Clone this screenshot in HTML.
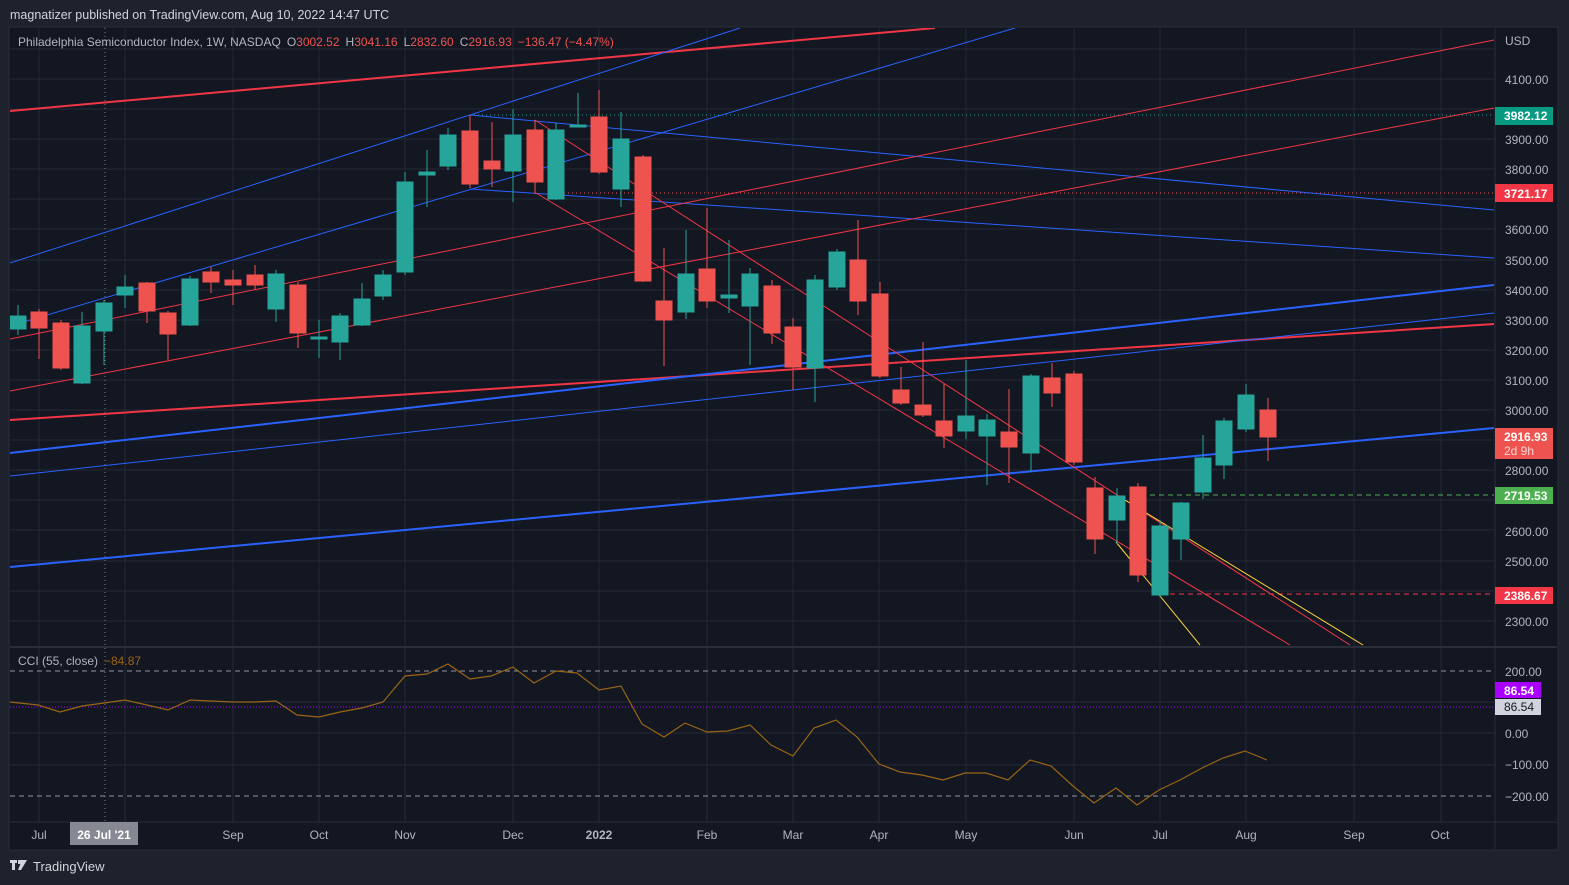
<!DOCTYPE html>
<html><head><meta charset="utf-8"><style>
html,body{margin:0;padding:0;background:#1e222d;width:1569px;height:885px;overflow:hidden;font-family:"Liberation Sans",sans-serif}
svg{display:block}
</style></head><body>
<svg width="1569" height="885" xmlns="http://www.w3.org/2000/svg" font-family="Liberation Sans, sans-serif">
<rect width="1569" height="885" fill="#1e222d"/>
<text x="10" y="19" fill="#d1d4dc" font-size="12.5">magnatizer published on TradingView.com, Aug 10, 2022 14:47 UTC</text>
<rect x="9" y="27" width="1549" height="823" fill="#131722" stroke="#2a2e39"/>
<g stroke="#262a35" stroke-width="1">
<line x1="10" y1="49" x2="1494" y2="49"/><line x1="10" y1="79" x2="1494" y2="79"/><line x1="10" y1="109" x2="1494" y2="109"/><line x1="10" y1="139" x2="1494" y2="139"/><line x1="10" y1="169" x2="1494" y2="169"/><line x1="10" y1="199" x2="1494" y2="199"/><line x1="10" y1="229" x2="1494" y2="229"/><line x1="10" y1="260" x2="1494" y2="260"/><line x1="10" y1="290" x2="1494" y2="290"/><line x1="10" y1="320" x2="1494" y2="320"/><line x1="10" y1="350" x2="1494" y2="350"/><line x1="10" y1="380" x2="1494" y2="380"/><line x1="10" y1="410" x2="1494" y2="410"/><line x1="10" y1="440" x2="1494" y2="440"/><line x1="10" y1="470" x2="1494" y2="470"/><line x1="10" y1="500" x2="1494" y2="500"/><line x1="10" y1="530" x2="1494" y2="530"/><line x1="10" y1="561" x2="1494" y2="561"/><line x1="10" y1="591" x2="1494" y2="591"/><line x1="10" y1="621" x2="1494" y2="621"/>
<line x1="10" y1="702" x2="1494" y2="702"/><line x1="10" y1="733" x2="1494" y2="733"/><line x1="10" y1="765" x2="1494" y2="765"/>
<line x1="39" y1="28" x2="39" y2="822"/><line x1="125" y1="28" x2="125" y2="822"/><line x1="233" y1="28" x2="233" y2="822"/><line x1="319" y1="28" x2="319" y2="822"/><line x1="405" y1="28" x2="405" y2="822"/><line x1="513" y1="28" x2="513" y2="822"/><line x1="599" y1="28" x2="599" y2="822"/><line x1="707" y1="28" x2="707" y2="822"/><line x1="793" y1="28" x2="793" y2="822"/><line x1="879" y1="28" x2="879" y2="822"/><line x1="966" y1="28" x2="966" y2="822"/><line x1="1074" y1="28" x2="1074" y2="822"/><line x1="1160" y1="28" x2="1160" y2="822"/><line x1="1246" y1="28" x2="1246" y2="822"/><line x1="1354" y1="28" x2="1354" y2="822"/><line x1="1441" y1="28" x2="1441" y2="822"/>
</g>
<line x1="10" y1="647" x2="1557" y2="647" stroke="#2a2e39" stroke-width="2"/>
<line x1="10" y1="822" x2="1557" y2="822" stroke="#2a2e39"/>
<line x1="1495" y1="28" x2="1495" y2="849" stroke="#2a2e39"/>
<line x1="105" y1="28" x2="105" y2="822" stroke="#787b86" stroke-dasharray="1,3"/>
<line x1="470" y1="115" x2="1494" y2="115" stroke="#26a69a" stroke-dasharray="1,3"/>
<line x1="560" y1="193" x2="1494" y2="193" stroke="#ef5350" stroke-dasharray="1,3"/>
<line x1="1150" y1="495" x2="1494" y2="495" stroke="#4caf50" stroke-dasharray="5,4"/>
<line x1="1170" y1="594" x2="1494" y2="594" stroke="#f23645" stroke-dasharray="5,4"/>
<svg x="10" y="28" width="1485" height="619" viewBox="10 28 1485 619" overflow="hidden">
<g fill="none">
<line x1="10" y1="111" x2="935" y2="28" stroke="#f23645" stroke-width="2"/>
<line x1="10" y1="263" x2="740" y2="28" stroke="#2962ff" stroke-width="1"/>
<line x1="10" y1="326" x2="1015" y2="28" stroke="#2962ff" stroke-width="1"/>
<line x1="470" y1="115" x2="1494" y2="210" stroke="#2962ff" stroke-width="1"/>
<line x1="470" y1="189" x2="1494" y2="258" stroke="#2962ff" stroke-width="1"/>
<line x1="10" y1="339" x2="1494" y2="40" stroke="#f23645" stroke-width="1"/>
<line x1="10" y1="391" x2="1494" y2="108" stroke="#f23645" stroke-width="1"/>
<line x1="10" y1="420" x2="1494" y2="324" stroke="#f23645" stroke-width="2"/>
<line x1="10" y1="453" x2="1494" y2="285" stroke="#2962ff" stroke-width="2"/>
<line x1="10" y1="476" x2="1494" y2="313" stroke="#2962ff" stroke-width="1"/>
<line x1="10" y1="567" x2="1494" y2="428" stroke="#2962ff" stroke-width="2"/>
<line x1="535" y1="120" x2="1350" y2="645" stroke="#f23645" stroke-width="1"/>
<line x1="536" y1="193" x2="1290" y2="645" stroke="#f23645" stroke-width="1"/>
<line x1="1116" y1="542" x2="1200" y2="645" stroke="#fdd835" stroke-width="1"/>
<line x1="1125" y1="500" x2="1363" y2="645" stroke="#fdd835" stroke-width="1"/>
</g>
<g stroke-width="1">
<g fill="#26a69a" stroke="#26a69a">
<line x1="18" y1="305" x2="18" y2="335"/><rect x="10" y="316" width="16" height="13"/>
<line x1="82" y1="312" x2="82" y2="384"/><rect x="74" y="326" width="16" height="57"/>
<line x1="104" y1="300" x2="104" y2="365"/><rect x="96" y="303" width="16" height="28"/>
<line x1="125" y1="275" x2="125" y2="308"/><rect x="117" y="287" width="16" height="8"/>
<line x1="190" y1="276" x2="190" y2="326"/><rect x="182" y="279" width="16" height="46"/>
<line x1="276" y1="270" x2="276" y2="322"/><rect x="268" y="274" width="16" height="35"/>
<line x1="319" y1="320" x2="319" y2="358"/><rect x="311" y="337" width="16" height="2"/>
<line x1="340" y1="313" x2="340" y2="360"/><rect x="332" y="316" width="16" height="26"/>
<line x1="362" y1="283" x2="362" y2="326"/><rect x="354" y="299" width="16" height="26"/>
<line x1="383" y1="270" x2="383" y2="300"/><rect x="375" y="275" width="16" height="21"/>
<line x1="405" y1="172" x2="405" y2="275"/><rect x="397" y="182" width="16" height="90"/>
<line x1="427" y1="150" x2="427" y2="207"/><rect x="419" y="172" width="16" height="3"/>
<line x1="448" y1="128" x2="448" y2="170"/><rect x="440" y="135" width="16" height="31"/>
<line x1="513" y1="109" x2="513" y2="202"/><rect x="505" y="135" width="16" height="36"/>
<line x1="556" y1="123" x2="556" y2="200"/><rect x="548" y="130" width="16" height="69"/>
<line x1="578" y1="93" x2="578" y2="126"/><rect x="570" y="125" width="16" height="2"/>
<line x1="621" y1="112" x2="621" y2="207"/><rect x="613" y="139" width="16" height="50"/>
<line x1="686" y1="230" x2="686" y2="319"/><rect x="678" y="274" width="16" height="38"/>
<line x1="729" y1="240" x2="729" y2="313"/><rect x="721" y="295" width="16" height="3"/>
<line x1="750" y1="268" x2="750" y2="365"/><rect x="742" y="274" width="16" height="32"/>
<line x1="815" y1="275" x2="815" y2="402"/><rect x="807" y="280" width="16" height="88"/>
<line x1="837" y1="249" x2="837" y2="290"/><rect x="829" y="252" width="16" height="35"/>
<line x1="966" y1="360" x2="966" y2="439"/><rect x="958" y="416" width="16" height="15"/>
<line x1="987" y1="414" x2="987" y2="485"/><rect x="979" y="420" width="16" height="16"/>
<line x1="1031" y1="374" x2="1031" y2="472"/><rect x="1023" y="376" width="16" height="77"/>
<line x1="1117" y1="488" x2="1117" y2="544"/><rect x="1109" y="496" width="16" height="24"/>
<line x1="1160" y1="520" x2="1160" y2="597"/><rect x="1152" y="526" width="16" height="69"/>
<line x1="1181" y1="502" x2="1181" y2="560"/><rect x="1173" y="503" width="16" height="36"/>
<line x1="1203" y1="435" x2="1203" y2="499"/><rect x="1195" y="458" width="16" height="34"/>
<line x1="1224" y1="418" x2="1224" y2="479"/><rect x="1216" y="421" width="16" height="44"/>
<line x1="1246" y1="384" x2="1246" y2="432"/><rect x="1238" y="395" width="16" height="34"/>
</g>
<g fill="#ef5350" stroke="#ef5350">
<line x1="39" y1="309" x2="39" y2="359"/><rect x="31" y="312" width="16" height="16"/>
<line x1="61" y1="320" x2="61" y2="370"/><rect x="53" y="323" width="16" height="45"/>
<line x1="147" y1="282" x2="147" y2="323"/><rect x="139" y="283" width="16" height="28"/>
<line x1="168" y1="311" x2="168" y2="360"/><rect x="160" y="313" width="16" height="21"/>
<line x1="211" y1="267" x2="211" y2="293"/><rect x="203" y="272" width="16" height="10"/>
<line x1="233" y1="270" x2="233" y2="305"/><rect x="225" y="280" width="16" height="5"/>
<line x1="255" y1="265" x2="255" y2="290"/><rect x="247" y="275" width="16" height="10"/>
<line x1="298" y1="282" x2="298" y2="348"/><rect x="290" y="285" width="16" height="48"/>
<line x1="470" y1="115" x2="470" y2="188"/><rect x="462" y="131" width="16" height="53"/>
<line x1="492" y1="122" x2="492" y2="187"/><rect x="484" y="161" width="16" height="8"/>
<line x1="535" y1="120" x2="535" y2="194"/><rect x="527" y="130" width="16" height="52"/>
<line x1="599" y1="90" x2="599" y2="174"/><rect x="591" y="117" width="16" height="55"/>
<line x1="643" y1="155" x2="643" y2="282"/><rect x="635" y="157" width="16" height="124"/>
<line x1="664" y1="248" x2="664" y2="366"/><rect x="656" y="301" width="16" height="19"/>
<line x1="707" y1="208" x2="707" y2="308"/><rect x="699" y="269" width="16" height="32"/>
<line x1="772" y1="280" x2="772" y2="344"/><rect x="764" y="286" width="16" height="47"/>
<line x1="793" y1="318" x2="793" y2="390"/><rect x="785" y="327" width="16" height="40"/>
<line x1="858" y1="220" x2="858" y2="315"/><rect x="850" y="260" width="16" height="41"/>
<line x1="880" y1="282" x2="880" y2="378"/><rect x="872" y="294" width="16" height="82"/>
<line x1="901" y1="367" x2="901" y2="405"/><rect x="893" y="390" width="16" height="13"/>
<line x1="923" y1="342" x2="923" y2="417"/><rect x="915" y="405" width="16" height="10"/>
<line x1="944" y1="384" x2="944" y2="448"/><rect x="936" y="421" width="16" height="15"/>
<line x1="1009" y1="389" x2="1009" y2="483"/><rect x="1001" y="432" width="16" height="15"/>
<line x1="1052" y1="363" x2="1052" y2="407"/><rect x="1044" y="378" width="16" height="15"/>
<line x1="1074" y1="371" x2="1074" y2="465"/><rect x="1066" y="374" width="16" height="88"/>
<line x1="1095" y1="477" x2="1095" y2="554"/><rect x="1087" y="488" width="16" height="51"/>
<line x1="1138" y1="483" x2="1138" y2="582"/><rect x="1130" y="487" width="16" height="88"/>
<line x1="1268" y1="398" x2="1268" y2="461"/><rect x="1260" y="410" width="16" height="27"/>
</g>
</g>
</svg>
<line x1="10" y1="671" x2="1494" y2="671" stroke="#b2b5be" stroke-dasharray="5,4" opacity="0.8"/>
<line x1="10" y1="796" x2="1494" y2="796" stroke="#b2b5be" stroke-dasharray="5,4" opacity="0.8"/>
<line x1="10" y1="707" x2="1494" y2="707" stroke="#aa00ff" stroke-dasharray="1,2"/>
<polyline fill="none" stroke="#996515" stroke-width="1.2" points="10,702 38,705 60,712 82,706 104,703 125,700 147,705 168,710 190,700 211,701 233,702 254,702 276,701 297,715 319,717 340,712 362,708 383,702 405,676 427,674 448,664 470,679 491,676 513,667 534,683 556,671 577,673 599,690 621,686 642,724 664,737 685,723 707,732 728,731 750,725 771,745 793,756 814,728 836,720 857,737 879,764 900,772 922,775 943,780 965,773 986,773 1008,780 1030,760 1051,766 1073,786 1094,803 1116,788 1137,805 1159,790 1180,780 1202,768 1223,758 1245,751 1267,760"/>
<text x="18" y="665" fill="#b2b5be" font-size="12">CCI (55, close)</text>
<text x="104" y="665" fill="#996515" font-size="12">−84.87</text>
<text x="18" y="46" font-size="12" fill="#b2b5be">Philadelphia Semiconductor Index, 1W, NASDAQ<tspan dx="6">O</tspan><tspan fill="#ef5350">3002.52</tspan><tspan dx="6">H</tspan><tspan fill="#ef5350">3041.16</tspan><tspan dx="6">L</tspan><tspan fill="#ef5350">2832.60</tspan><tspan dx="6">C</tspan><tspan fill="#ef5350">2916.93</tspan><tspan dx="6" fill="#ef5350">−136.47 (−4.47%)</tspan></text>
<g fill="#b2b5be" font-size="12">
<text x="1505" y="45">USD</text>
<text x="1505" y="84">4100.00</text><text x="1505" y="144">3900.00</text><text x="1505" y="174">3800.00</text><text x="1505" y="234">3600.00</text><text x="1505" y="265">3500.00</text><text x="1505" y="295">3400.00</text><text x="1505" y="325">3300.00</text><text x="1505" y="355">3200.00</text><text x="1505" y="385">3100.00</text><text x="1505" y="415">3000.00</text><text x="1505" y="475">2800.00</text><text x="1505" y="536">2600.00</text><text x="1505" y="566">2500.00</text><text x="1505" y="626">2300.00</text>
<text x="1505" y="676">200.00</text><text x="1505" y="738">0.00</text><text x="1505" y="769">−100.00</text><text x="1505" y="801">−200.00</text>
</g>
<rect x="1495" y="107" width="58" height="18" fill="#089981"/><text x="1504" y="120" fill="#fff" font-size="12" font-weight="bold">3982.12</text>
<rect x="1495" y="184" width="58" height="18" fill="#f23645"/><text x="1504" y="198" fill="#fff" font-size="12" font-weight="bold">3721.17</text>
<rect x="1495" y="428" width="58" height="31" fill="#ef5350"/><text x="1504" y="441" fill="#fff" font-size="12" font-weight="bold">2916.93</text><text x="1504" y="455" fill="#fbd5d4" font-size="12">2d 9h</text>
<rect x="1495" y="487" width="58" height="17" fill="#4caf50"/><text x="1504" y="500" fill="#fff" font-size="12" font-weight="bold">2719.53</text>
<rect x="1495" y="587" width="58" height="17" fill="#f23645"/><text x="1504" y="600" fill="#fff" font-size="12" font-weight="bold">2386.67</text>
<rect x="1495" y="682" width="46" height="16" fill="#aa00ff"/><text x="1504" y="695" fill="#fff" font-size="12" font-weight="bold">86.54</text>
<rect x="1495" y="699" width="46" height="16" fill="#d1d4dc"/><text x="1504" y="711" fill="#131722" font-size="12">86.54</text>
<g fill="#b2b5be" font-size="12" text-anchor="middle">
<text x="39" y="839">Jul</text><text x="233" y="839">Sep</text><text x="319" y="839">Oct</text><text x="405" y="839">Nov</text><text x="513" y="839">Dec</text><text x="599" y="839" font-weight="bold">2022</text><text x="707" y="839">Feb</text><text x="793" y="839">Mar</text><text x="879" y="839">Apr</text><text x="966" y="839">May</text><text x="1074" y="839">Jun</text><text x="1160" y="839">Jul</text><text x="1246" y="839">Aug</text><text x="1354" y="839">Sep</text><text x="1440" y="839">Oct</text>
</g>
<rect x="70" y="822" width="68" height="23" fill="#868993"/>
<text x="104" y="839" fill="#fff" font-size="12" font-weight="bold" text-anchor="middle">26 Jul '21</text>
<g fill="#d1d4dc">
<rect x="10" y="860" width="7" height="3"/><rect x="12" y="860" width="3" height="10"/><rect x="18" y="860" width="4" height="4"/><path d="M22 860 L27 860 L21 870 L18 870 Z"/>
</g>
<text x="33" y="871" fill="#d1d4dc" font-size="13">TradingView</text>
</svg>
</body></html>
